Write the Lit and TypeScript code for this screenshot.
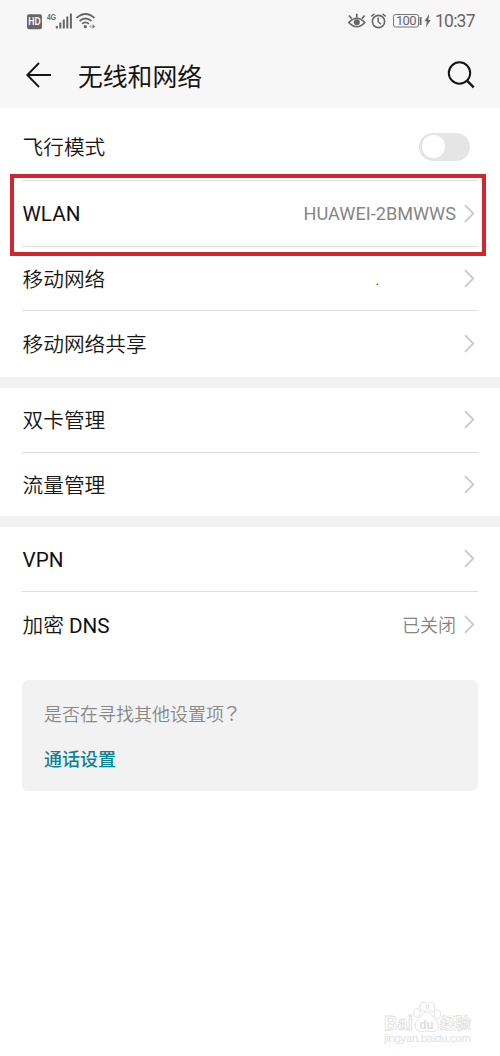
import { LitElement, html, css, nothing } from "lit";
import { customElement, property } from "lit/decorators.js";

interface Item {
  label: string;
  value?: string;
  kind?: "switch" | "dot" | "network";
  height: number;
}

const groups: Item[][] = [
  [
    { label: "飞行模式", kind: "switch", height: 72 },
    { label: "WLAN", value: "HUAWEI-2BMWWS", kind: "network", height: 65 },
    { label: "移动网络", value: ".", kind: "dot", height: 63 },
    { label: "移动网络共享", height: 66 },
  ],
  [
    { label: "双卡管理", height: 64 },
    { label: "流量管理", height: 63 },
  ],
  [
    { label: "VPN", height: 64 },
    { label: "加密 DNS", value: "已关闭", height: 66 },
  ],
];

@customElement("status-bar")
class StatusBar extends LitElement {
  static styles = css`
    :host { display: flex; height: 42px; padding: 0 24px 0 27px; justify-content: space-between; box-sizing: border-box; color: #666; }
    svg { display: block; }
    .clock { font: 17.5px Roboto, sans-serif; }
    .hd { font: bold 10px "Liberation Sans", sans-serif; }
    .gen { font: bold 9.5px "Liberation Sans", sans-serif; }
    .level { font: 13px Roboto, sans-serif; }
  `;
  render() {
    return html`
      <svg width="72" height="42" viewBox="27 0 72 42" fill="none" stroke="#666">
        <rect x="27" y="14.3" width="15" height="15" rx="2" fill="#666" stroke="none" />
        <text class="hd" x="28.3" y="25.4" textLength="12.4" lengthAdjust="spacingAndGlyphs" fill="#f7f7f7" stroke="none">HD</text>
        <text class="gen" x="47" y="20.3" textLength="9" lengthAdjust="spacingAndGlyphs" fill="#666" stroke="none">4G</text>
        <path d="M56.8 26v2.5M60.3 22.5v6M63.8 19.5v9M67.3 16.5v12M70.9 13.5v15" stroke-width="2" />
        <path d="M76.5 18q9-8 18 0M79.5 21q6-5 12 0M82 23.8q3.5-2.8 7 0" stroke-width="1.7" />
        <circle cx="85.3" cy="26.7" r="1.6" fill="#666" stroke="none" />
        <path d="M91.5 24.5v4l-2.8-2z" fill="#bbb" stroke="none" />
        <path d="M92.5 24.3v4.4l2.8-2.2z" fill="#777" stroke="none" />
      </svg>
      <svg width="130" height="42" viewBox="346 0 130 42" fill="none" stroke="#666">
        <path d="M348.8 22.5q8-8.5 16 0q-8 8.5-16 0z" stroke-width="1.7" />
        <circle cx="356.8" cy="22.3" r="3" fill="#666" stroke="none" />
        <path d="M356.8 17.5v-3.7M351.7 18.7l-2.7-3.2M361.9 18.7l2.7-3.2" stroke-width="1.7" />
        <circle cx="378.5" cy="21.5" r="6.1" stroke-width="1.6" />
        <path d="M378.2 17.5v4.2l2.7 2.5M371.3 16.4l3.2-2.7M385.7 16.4l-3.2-2.7" stroke-width="1.5" />
        <rect x="393.5" y="14.5" width="25" height="12.5" rx="2" stroke="#777" />
        <text class="level" x="396" y="25.3" textLength="20.5" fill="#666" stroke="none">100</text>
        <path d="M420.6 17v8" stroke-width="1.8" />
        <path d="M429.2 14l-4.7 7.3h2.4l-1.1 6.2 4.9-7.5h-2.4z" fill="#666" stroke="none" />
        <text class="clock" x="435" y="27.3" textLength="40.5" fill="#666" stroke="none">10:37</text>
      </svg>
    `;
  }
}

@customElement("setting-row")
class SettingRow extends LitElement {
  @property({ attribute: false }) item!: Item;
  static styles = css`
    :host { display: block; }
    .row { display: flex; align-items: center; box-sizing: border-box; height: 100%; line-height: 28px; }
    .row.switch { padding-top: 5px; }
    .label { flex: 1; padding: 2px 0 0 0.5px; font-size: 20.7px; font-weight: 350; color: #161616; white-space: pre; }
    .latin { font-weight: 400; color: #111; }
    .value { padding-top: 1px; font-size: 18px; font-weight: 350; color: #858585; margin-right: 8px; }
    .row.network .label, .row.network .value { padding-top: 0; }
    .value.network { font-size: 18.15px; font-weight: 400; color: #858585; }
    .value.dot { font-size: 12px; font-weight: 400; color: #222; margin: 3px 85px 0 0; }
    .track { box-sizing: border-box; width: 51px; height: 28px; padding: 2.5px; border-radius: 14px; background: #e5e5e5; margin-right: 8px; }
    .thumb { width: 23px; height: 23px; border-radius: 50%; background: #fff; }
    .chevron { display: block; margin-right: 2px; }
  `;
  render() {
    const { label, value, kind } = this.item;
    const parts = label.split(/([A-Z]+)/).filter(Boolean);
    return html`<div class="row ${kind ?? ""}">
      <span class="label">${parts.map((p) => (/[A-Z]/.test(p) ? html`<span class="latin">${p}</span>` : p))}</span>
      ${value ? html`<span class="value ${kind ?? ""}">${value}</span>` : nothing}
      ${kind === "switch"
        ? html`<div class="track"><div class="thumb"></div></div>`
        : html`<svg class="chevron" width="12" height="20" viewBox="0 0 12 20" fill="none" stroke="#c9c9c9" stroke-width="1.8">
            <path d="M1 1.2L9.3 9.5L1 17.8" />
          </svg>`}
    </div>`;
  }
}

@customElement("baidu-mark")
class BaiduMark extends LitElement {
  static styles = css`
    :host { position: absolute; left: 380px; top: 998px; }
    svg { display: block; }
    .brand { font: bold 21px "Liberation Sans", sans-serif; }
    .du { font: bold 13px "Liberation Sans", sans-serif; }
    .cn { font: bold 15.5px "Noto Sans CJK SC", sans-serif; }
    .url { font: 11.5px "Liberation Sans", sans-serif; }
  `;
  render() {
    return html`<svg width="100" height="50" viewBox="380 998 100 50" fill="#fff" stroke="#dedede" stroke-width="0.9">
      <text class="brand" x="384" y="1030" textLength="29" lengthAdjust="spacingAndGlyphs">Bai</text>
      <ellipse cx="417" cy="1013" rx="3.2" ry="4.3" />
      <ellipse cx="423.3" cy="1006.8" rx="3.3" ry="4.6" />
      <ellipse cx="431.5" cy="1007" rx="3.3" ry="4.6" />
      <ellipse cx="437.4" cy="1014.2" rx="3.2" ry="4.3" />
      <path d="M427 1012c4 0 5.5 5 8.5 8c5 5 4 11.5-2 11.5c-4 0-8-1-12 0c-7 0-8-7.5-4-11.5c4-3 5.5-8 9.5-8z" />
      <text class="du" x="419.5" y="1028.5" textLength="14" lengthAdjust="spacingAndGlyphs" fill="#dedede" stroke="none">du</text>
      <text class="cn" x="440" y="1029" textLength="31" stroke-width="0.7">经验</text>
      <text class="url" x="384" y="1042" textLength="87" stroke="none" fill="#dfdfdf">jingyan.baidu.com</text>
    </svg>`;
  }
}

@customElement("app-root")
class AppRoot extends LitElement {
  static styles = css`
    :host { display: block; position: relative; height: 1056px; overflow: hidden; background: #fff; font-family: Roboto, "Noto Sans CJK SC", sans-serif; }
    .header { height: 108px; background: #f7f7f7; }
    .title-bar { display: flex; align-items: center; height: 66px; padding: 0 25px 0 26px; }
    .title { flex: 1; margin: 5px 0 0 27px; font-size: 24.8px; font-weight: 400; line-height: 36px; color: #151515; }
    .group { padding: 0 22px; }
    .group + .group { border-top: 11px solid #f2f2f2; }
    .cell + .cell { border-top: 1px solid #dedede; }
    .cell { display: grid; }
    .card { margin: 22px 22px 0; height: 111px; box-sizing: border-box; padding: 21px 22px; border-radius: 6px; background: #f2f2f2; font-size: 18px; line-height: 28px; }
    .hint { height: 28px; color: #888; font-weight: 350; }
    .mark { font-family: "Noto Sans CJK TC", sans-serif; font-size: 19.5px; line-height: 1; margin-left: -2px; }
    .link { margin-top: 17px; color: #0c8295; font-weight: 500; }
    .highlight { position: absolute; left: 10px; top: 174px; width: 476px; height: 82px; box-sizing: border-box; border: 4px solid #d02630; }
  `;
  render() {
    return html`
      <div class="header">
        <status-bar></status-bar>
        <div class="title-bar">
          <svg width="25" height="26" viewBox="0 0 25 26" fill="none" stroke="#151515" stroke-width="1.9">
            <path d="M13 1L1.3 13L13 25M1.3 13H25" />
          </svg>
          <div class="title">无线和网络</div>
          <svg width="28" height="28" viewBox="0 0 28 28" fill="none" stroke="#151515" stroke-width="2">
            <circle cx="12.5" cy="12" r="10.7" />
            <path d="M20 19.7L26.7 26.4" stroke-width="2.4" />
          </svg>
        </div>
      </div>
      ${groups.map(
        (items) => html`<div class="group">
          ${items.map(
            (item) => html`<div class="cell" style="grid-template-rows:${item.height}px"><setting-row .item=${item}></setting-row></div>`
          )}
        </div>`
      )}
      <div class="card">
        <div class="hint">是否在寻找其他设置项<span class="mark" lang="zh-TW">？</span></div>
        <div class="link">通话设置</div>
      </div>
      <div class="highlight"></div>
      <baidu-mark></baidu-mark>
    `;
  }
}
